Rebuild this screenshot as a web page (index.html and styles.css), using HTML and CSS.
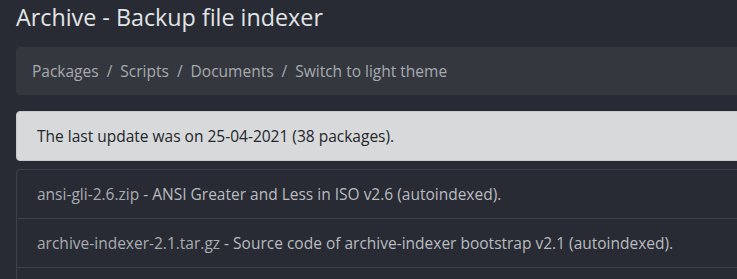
FILE: index.html
```html
<!DOCTYPE html>
<html lang="en">
<head>
<meta charset="utf-8">
<title>Archive - Backup file indexer</title>
<link rel="stylesheet" href="styles.css">
</head>
<body>
<div class="page">
  <h1 class="title">Archive - Backup file indexer</h1>
  <nav class="crumbs">
    <a class="crumb" href="#">Packages</a>
    <a class="crumb" href="#">Scripts</a>
    <a class="crumb" href="#">Documents</a>
    <a class="crumb" href="#">Switch to light theme</a>
  </nav>
  <div class="alert">The last update was on 25-04-2021 (38 packages).</div>
  <ul class="files">
    <li class="file"><a href="#">ansi-gli-2.6.zip</a> - ANSI Greater and Less in ISO v2.6 (autoindexed).</li>
    <li class="file"><a href="#">archive-indexer-2.1.tar.gz</a> - Source code of archive-indexer bootstrap v2.1 (autoindexed).</li>
    <li class="file"><a href="#">archive-indexer-2.0.tar.gz</a> - Source code of archive-indexer bootstrap v2.0 (autoindexed).</li>
  </ul>
</div>
</body>
</html>
```
FILE: styles.css
```css
html, body {
  margin: 0;
  overflow: hidden;
}
body {
  background: #282b33;
  font-family: "Open Sans", "Noto Sans", sans-serif;
  font-size: 15.5px;
  line-height: 24px;
  color: #b9bcc0;
}
.page {
  width: 1000px;
  padding: 0 16px;
}
.title {
  margin: 3px 0 15px;
  font-size: 23.3px;
  line-height: 29px;
  font-weight: 400;
  color: #e1e4e7;
}
.crumbs {
  display: flex;
  background: #34373e;
  border-radius: 4px;
  padding: 12px 16px;
  margin-bottom: 16px;
}
.crumb {
  color: #a7abb0;
  text-decoration: none;
}
.crumb + .crumb::before {
  content: "/";
  display: inline-block;
  padding: 0 8px;
  color: #a7abb0;
}
.alert {
  background: #d8d9da;
  border: 1px solid #c9cacc;
  border-radius: 4px;
  padding: 12px 20px;
  color: #23262b;
  margin-bottom: 8px;
}
.files {
  list-style: none;
  margin: 0;
  padding: 0;
  border: 1px solid #3d4048;
  border-radius: 4px;
}
.file {
  padding: 12px 20px;
  color: #b9bcc0;
}
.file + .file {
  border-top: 1px solid #3d4048;
}
.file a {
  color: #a9adb2;
  text-decoration: none;
}
```
